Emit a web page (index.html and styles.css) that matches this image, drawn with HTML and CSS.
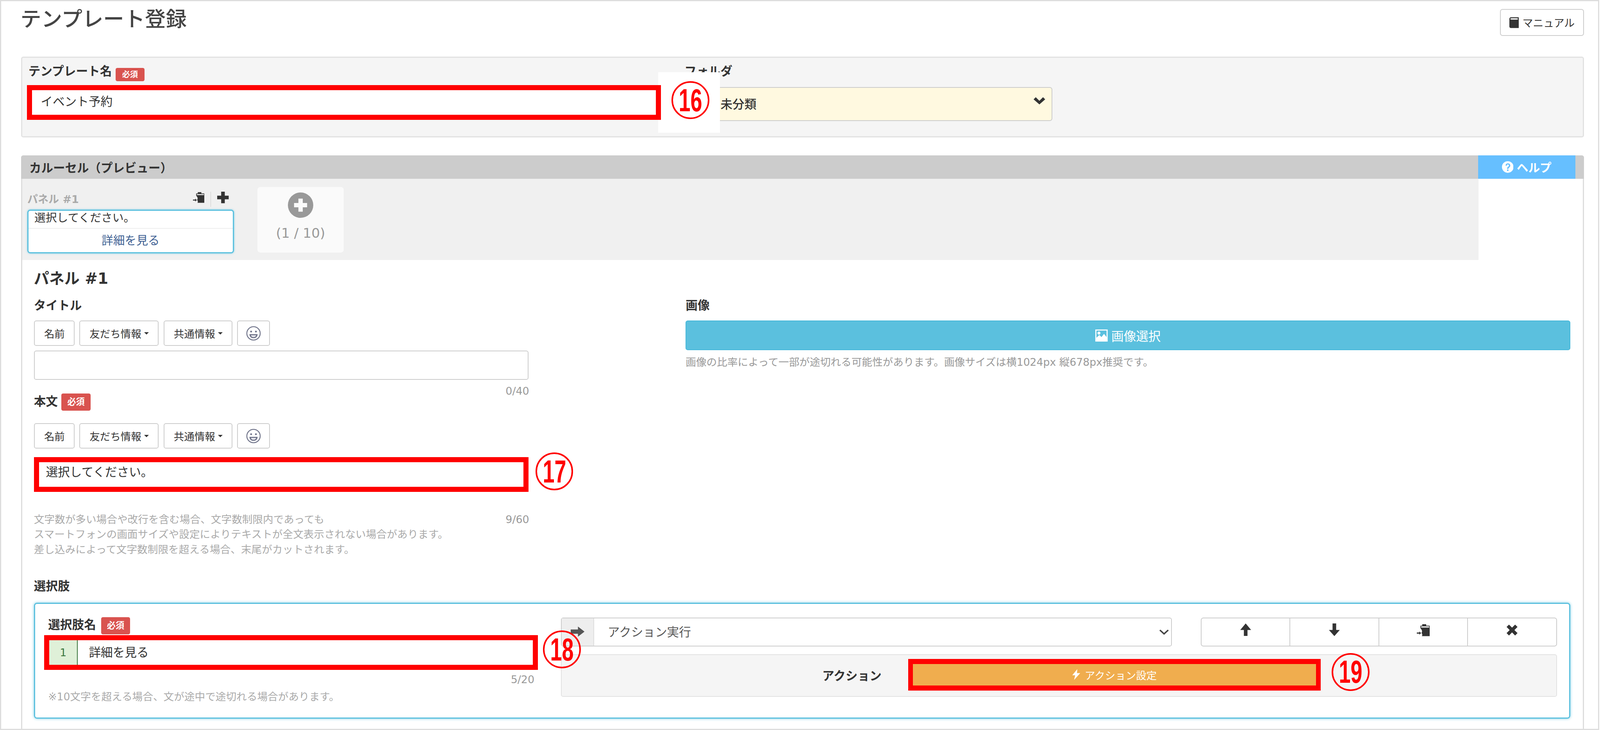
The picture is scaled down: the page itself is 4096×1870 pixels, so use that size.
FILE: index.html
```html
<!DOCTYPE html>
<html lang="ja">
<head>
<meta charset="utf-8">
<title>テンプレート登録</title>
<link rel="stylesheet" href="styles.css">
</head>
<body>
<svg class="defs" width="0" height="0" aria-hidden="true">
  <symbol id="i-copy" viewBox="0 0 36 33"><path fill-rule="evenodd" d="M15 0h11v4h10v29H14c2-3 1-6-1-9 3-4 1-9-3-13V4h5zM12 6v3h22V6z" fill="currentColor"/><path d="M0 23h7v-3l5 4.500-5 4.500v-3H0z" fill="currentColor"/></symbol>
  <symbol id="i-plus" viewBox="0 0 32 32"><path d="M11 0h10v11h11v10H21v11H11V21H0V11h11z" fill="currentColor"/></symbol>
  <symbol id="i-up" viewBox="0 0 30 35"><path d="M15 0l15 18H20v17H10V18H0z" fill="currentColor"/></symbol>
  <symbol id="i-down" viewBox="0 0 30 35"><path d="M10 0h10v18h10L15 35 0 18h10z" fill="currentColor"/></symbol>
  <symbol id="i-x" viewBox="0 0 32 32"><path d="M7 0l9 9 9-9 7 7-9 9 9 9-7 7-9-9-9 9-7-7 9-9-9-9z" fill="currentColor"/></symbol>
  <symbol id="i-smile" viewBox="0 0 40 40"><circle cx="20" cy="20" r="18" fill="none" stroke="currentColor" stroke-width="2.500"/><circle cx="13.500" cy="15" r="2.500" fill="currentColor"/><circle cx="26.500" cy="15" r="2.500" fill="currentColor"/><path d="M9 22h22c0 7-5 11-11 11S9 29 9 22z" fill="currentColor"/><path d="M13 25h14c-1 4-4 5-7 5s-6-1-7-5z" fill="#e8e8ee"/></symbol>
</svg>
<div class="page">
  <header class="page-head">
    <h1 class="page-title">テンプレート登録</h1>
    <button class="btn-manual" type="button">
      <svg class="ic-book" viewBox="0 0 28 32"><path d="M5 0h23v32H4c-2 0-4-2-4-4V5c0-3 2-5 5-5zm0 3c-1 0-2 1-2 2s1 2 2 2h20V3z" fill="#333"/></svg>
      <span>マニュアル</span>
    </button>
  </header>

  <section class="meta">
    <div class="meta-name">
      <div class="label-row label-row-name"><span class="label">テンプレート名</span><span class="badge badge-sm">必須</span></div>
      <div class="redbox redbox-name"><span class="mark mark-16"><span class="mark-num">16</span></span><div class="redbox-fill">イベント予約</div></div>
    </div>
    <div class="meta-folder">
      <div class="label-row"><span class="label">フォルダ</span></div>
      <div class="folder-select">
        <span class="folder-value">未分類</span>
        <svg class="ic-chev" viewBox="0 0 32 20"><path d="M0 6l6-6 10 10L26 0l6 6-16 14z" fill="#333"/></svg>
      </div>
    </div>
    <div class="patch"></div>
  </section>

  <section class="carousel">
    <div class="carousel-head">
      <span class="carousel-title">カルーセル（プレビュー）</span>
      <a class="help">
        <svg class="ic-help" viewBox="0 0 32 32"><circle cx="16" cy="16" r="16" fill="#fff"/><path d="M10 12c0-4 3-6 6-6 4 0 7 2 7 6 0 5-5 5-5 9h-4c0-6 5-6 5-9 0-2-1-3-3-3s-2 1-2 3zM14 23h4v4h-4z" fill="#66bfff"/></svg>
        <span>ヘルプ</span>
      </a>
    </div>
    <div class="strip">
      <div class="slot">
        <div class="slot-head">
          <span class="slot-name">パネル #1</span>
          <span class="slot-tools">
            <svg class="ic-tool"><use href="#i-copy"/></svg>
            <span class="slot-sep"></span>
            <svg class="ic-tool"><use href="#i-plus"/></svg>
          </span>
        </div>
        <div class="slot-card">
          <div class="slot-text">選択してください。</div>
          <div class="slot-link">詳細を見る</div>
        </div>
      </div>
      <div class="add-tile">
        <svg class="ic-add" viewBox="0 0 70 70"><circle cx="35" cy="35" r="35" fill="#999"/><path d="M29 17h12v12h12v12H41v12H29V41H17V29h12z" fill="#fafafa"/></svg>
        <span class="add-count">(1 / 10)</span>
      </div>
    </div>

    <div class="panel">
      <h2 class="panel-title">パネル #1</h2>
      <div class="panel-grid">
        <div class="panel-left">
          <div class="label label-title">タイトル</div>
          <div class="btn-row">
            <button class="btn" type="button">名前</button>
            <button class="btn" type="button">友だち情報<i class="caret"></i></button>
            <button class="btn" type="button">共通情報<i class="caret"></i></button>
            <button class="btn btn-emoji" type="button"><svg class="ic-smile"><use href="#i-smile"/></svg></button>
          </div>
          <div class="text-input"></div>
          <div class="count">0/40</div>
          <div class="label-row label-row-body"><span class="label">本文</span><span class="badge">必須</span></div>
          <div class="btn-row">
            <button class="btn" type="button">名前</button>
            <button class="btn" type="button">友だち情報<i class="caret"></i></button>
            <button class="btn" type="button">共通情報<i class="caret"></i></button>
            <button class="btn btn-emoji" type="button"><svg class="ic-smile"><use href="#i-smile"/></svg></button>
          </div>
          <div class="redbox redbox-body"><span class="mark mark-17"><span class="mark-num">17</span></span><div class="redbox-fill">選択してください。</div></div>
          <div class="help-row">
            <p class="hint-block">文字数が多い場合や改行を含む場合、文字数制限内であっても<br>スマートフォンの画面サイズや設定によりテキストが全文表示されない場合があります。<br>差し込みによって文字数制限を超える場合、末尾がカットされます。</p>
            <span class="count count-inline">9/60</span>
          </div>
        </div>
        <div class="panel-right">
          <div class="label label-title">画像</div>
          <button class="btn-image" type="button">
            <svg class="ic-picture" viewBox="0 0 34 34"><path fill-rule="evenodd" d="M0 0h34v34H0zM3 3v20l8-8 6 6 7-9 7 9V3zM10 6a4 4 0 1 1 0 8 4 4 0 0 1 0-8z" fill="#fff"/></svg>
            <span>画像選択</span>
          </button>
          <p class="hint">画像の比率によって一部が途切れる可能性があります。画像サイズは横1024px 縦678px推奨です。</p>
        </div>
      </div>

      <div class="label label-choice">選択肢</div>
      <div class="choice">
        <div class="choice-left">
          <div class="label-row label-row-choice"><span class="label">選択肢名</span><span class="badge">必須</span></div>
          <div class="redbox redbox-choice">
            <span class="mark mark-18"><span class="mark-num">18</span></span>
            <div class="choice-input"><span class="choice-no">1</span><span class="choice-text">詳細を見る</span></div>
          </div>
          <div class="count count-choice">5/20</div>
          <p class="hint hint-choice">※10文字を超える場合、文が途中で途切れる場合があります。</p>
        </div>
        <div class="choice-right">
          <div class="choice-top">
            <div class="action-select">
              <span class="action-addon"><svg class="ic-arrow" viewBox="0 0 38 28"><path d="M0 8h20V0l18 14-18 14v-8H0z" fill="#555"/></svg></span>
              <span class="action-value">アクション実行</span>
              <svg class="ic-sel" viewBox="0 0 28 16"><path d="M0 3l3-3 11 10L25 0l3 3-14 13z" fill="#444"/></svg>
            </div>
            <div class="tool-group">
              <button class="tool" type="button"><svg class="ic-tool-lg"><use href="#i-up"/></svg></button>
              <button class="tool" type="button"><svg class="ic-tool-lg"><use href="#i-down"/></svg></button>
              <button class="tool" type="button"><svg class="ic-tool-copy"><use href="#i-copy"/></svg></button>
              <button class="tool" type="button"><svg class="ic-tool-x"><use href="#i-x"/></svg></button>
            </div>
          </div>
          <div class="action-panel">
            <span class="action-label">アクション</span>
            <div class="redbox redbox-action">
              <span class="mark mark-19"><span class="mark-num">19</span></span>
              <div class="action-btn">
                <svg class="ic-flash" viewBox="0 0 22 30"><path d="M14 0L0 17h8L5 30l17-19h-9z" fill="#fff"/></svg>
                <span>アクション設定</span>
              </div>
            </div>
          </div>
        </div>
      </div>
    </div>
  </section>
</div>
</body>
</html>
```
FILE: styles.css
```css
html { overflow: hidden; background: #fff; }
body {
  margin: 0;
  font-family: "DejaVu Sans", "Noto Sans CJK JP", sans-serif;
  font-size: 26.9px;
  color: #333;
}
button { font-family: inherit; color: inherit; padding: 0; background: #fff; cursor: pointer; }
.defs { position: absolute; }

.page {
  box-sizing: border-box;
  width: 4094px;
  height: 1870px;
  border: 3px solid #ddd;
  padding: 20.2px 36px 0 51px;
  display: flex;
  flex-direction: column;
  background: #fff;
}

.page-head { display: flex; justify-content: space-between; align-items: flex-start; height: 68.75px; margin-bottom: 52.95px; flex: none; }
.page-title { margin: -3.7px 0 0 -1.7px; font-size: 53.4px; line-height: 59.5px; font-weight: 500; color: #444; }
.btn-manual {
  box-sizing: border-box;
  width: 214.6px;
  height: 68.75px;
  border: 2px solid #ccc;
  border-radius: 6.5px;
  display: flex;
  align-items: center;
  justify-content: center;
  gap: 9.3px;
  font-size: 26.9px;
}
.ic-book { width: 24px; height: 28px; }

.label { font-size: 30.66px; line-height: 33.44px; font-weight: 700; color: #333; }
.label-row { display: flex; align-items: flex-start; gap: 9.3px; }
.badge {
  box-sizing: border-box;
  width: 74.3px;
  height: 43.7px;
  border-radius: 4.6px;
  background: #d9534f;
  color: #fff;
  font-size: 22.3px;
  font-weight: 700;
  line-height: 43.7px;
  text-align: center;
}
.badge-sm { height: 34.4px; line-height: 34.4px; font-size: 20.4px; margin-top: 7.4px; }

.meta {
  position: relative;
  box-sizing: border-box;
  height: 207.2px;
  flex: none;
  border: 3px solid #e2e2e2;
  border-radius: 5.6px;
  background: #f5f5f5;
  padding: 18.6px 0 0 12px;
  display: flex;
}
.label-row-name { height: 51.1px; padding-left: 3.7px; }
.meta-name { width: 1623.1px; }
.meta-folder { margin-left: 60.2px; width: 942px; }
.meta-folder .label-row { height: 56.7px; }
.folder-select {
  box-sizing: border-box;
  height: 87.3px;
  border: 2px solid #ccc;
  border-radius: 6.5px;
  background: #fff9e0;
  display: flex;
  justify-content: space-between;
  padding: 24.2px 16.7px 0 90.1px;
  font-size: 30.66px;
  font-weight: 500;
}
.folder-value { line-height: 37.2px; }
.ic-chev { width: 29.7px; height: 18.6px; }
.patch { position: absolute; left: 1627.8px; top: 37.2px; width: 158px; height: 155.1px; background: #fff; }

.redbox { position: relative; box-sizing: border-box; height: 89.2px; border: 13px solid #f00; background: #fff; z-index: 2; }
.redbox-fill { box-sizing: border-box; height: 63.2px; font-size: 30.66px; line-height: 33.44px; }
.redbox-name .redbox-fill { padding: 13px 0 0 22.3px; }
.redbox-body .redbox-fill { padding: 9.3px 0 0 17.7px; }
.mark {
  position: absolute;
  box-sizing: border-box;
  width: 96.6px;
  height: 96.6px;
  border: 4px solid #f00;
  border-radius: 50%;
  color: #f00;
  display: flex;
  align-items: center;
  justify-content: center;
  font-family: "Liberation Sans", sans-serif;
  font-size: 81.75px;
  font-weight: 700;
  line-height: 1;
}
.mark-num { display: block; transform: scaleX(0.66); }
.mark-16 { left: calc(100% + 40px); top: -22.3px; }
.mark-17 { left: calc(100% + 30.7px); top: -24.2px; }
.mark-18 { left: calc(100% + 26px); top: -24.2px; }
.mark-19 { left: calc(100% + 40px); top: -27.9px; }

.carousel {
  flex: 1;
  min-height: 0;
  margin-top: 45.5px;
  box-sizing: border-box;
  border: solid #ddd;
  border-width: 0 3px;
  border-radius: 5.6px 5.6px 0 0;
}
.carousel-head { height: 60.4px; background: #ccc; display: flex; justify-content: space-between; align-items: center; padding-left: 21px; margin: 0 -3px; border-radius: 5.6px 5.6px 0 0; }
.carousel-title { font-size: 30.5px; font-weight: 700; color: #333; }
.help {
  box-sizing: border-box;
  width: 249px;
  height: 60.4px;
  margin-right: 22.3px;
  background: #66bfff;
  color: #fff;
  display: flex;
  align-items: center;
  justify-content: center;
  gap: 8.4px;
  font-size: 29.7px;
  font-weight: 700;
}
.ic-help { width: 29.7px; height: 29.7px; }

.strip { box-sizing: border-box; width: 3728px; height: 208.1px; background: #f0f0f0; padding: 21.4px 0 0 13px; display: flex; gap: 60.4px; align-items: flex-start; }
.slot { width: 528.6px; margin-top: 12.1px; }
.slot-head { display: flex; justify-content: space-between; height: 45.5px; }
.slot-name { font-size: 27px; line-height: 39px; font-weight: 700; color: #aaa; }
.slot-tools { display: flex; align-items: flex-start; margin-right: 13px; gap: 15.8px; }
.ic-tool { width: 29.7px; height: 29.7px; color: #333; }
.slot-sep { width: 1px; height: 39px; background: #ccc; }
.slot-card {
  box-sizing: border-box;
  height: 112.4px;
  border: 3px solid #5bc0de;
  border-radius: 7.4px;
  background: #fff;
  box-shadow: 0 0 5.6px #7fcde4;
}
.slot-text { box-sizing: border-box; height: 45.7px; font-size: 28.8px; line-height: 37.2px; padding-left: 14.9px; border-bottom: 2px solid #eee; }
.slot-link { text-align: center; font-size: 29.7px; line-height: 40.9px; padding-top: 10.8px; color: #3e5f92; }
.add-tile { box-sizing: border-box; width: 221.1px; height: 167.2px; background: #fafafa; border-radius: 7.4px; display: flex; flex-direction: column; align-items: center; padding-top: 13.9px; }
.ic-add { width: 65px; height: 65px; }
.add-count { margin-top: 20.4px; font-size: 34.4px; line-height: 37.2px; color: #999; }

.panel { padding: 25.1px 31.7px 0 29.7px; }
.panel-title { margin: 0 0 27.9px; font-size: 39px; line-height: 46.5px; font-weight: 700; color: #333; }
.panel-grid { display: grid; grid-template-columns: 1268px 2265px; column-gap: 400.6px; }
.label-title { margin-bottom: 22.3px; }
.btn-row { display: flex; gap: 12.1px; }
.btn {
  box-sizing: border-box;
  height: 65px;
  padding: 0 23.2px 0 24.2px;
  border: 2px solid #ccc;
  border-radius: 5.6px;
  font-size: 26.5px;
  display: flex;
  align-items: center;
}
.btn-emoji { width: 83.6px; padding: 0; justify-content: center; }
.caret { width: 0; height: 0; margin-left: 7.4px; border: 6.5px solid transparent; border-top-color: #333; border-bottom: 0; }
.ic-smile { width: 38px; height: 38px; color: #6f7389; }
.text-input { box-sizing: border-box; width: 1266.4px; height: 74.3px; margin-top: 12.1px; border: 2px solid #ccc; border-radius: 5.6px; background: #fff; }
.count { color: #999; font-size: 26.9px; line-height: 27.9px; text-align: right; }
.panel-left > .count { margin-top: 14.9px; }
.label-row-body { margin: -7.4px 0 32.5px; }
.label-row-body .label { margin-top: 3.7px; }
.redbox-body { width: 1266.4px; margin-top: 21.4px; }
.help-row { display: flex; justify-content: space-between; margin-top: 52px; }
.hint-block { margin: 0; font-size: 26.66px; line-height: 38.55px; color: #aaa; }
.count-inline { line-height: 38.55px; }
.hint { margin: 0; font-size: 26.66px; line-height: 33.44px; color: #999; }
.btn-image {
  box-sizing: border-box;
  width: 100%;
  height: 76.2px;
  border: 2px solid #46b8da;
  border-radius: 5.6px;
  background: #5bc0de;
  color: #fff;
  display: flex;
  align-items: center;
  justify-content: center;
  gap: 9.3px;
  font-size: 31.6px;
}
.ic-picture { width: 31.6px; height: 31.6px; }
.panel-right .hint { margin-top: 13.9px; }

.label-choice { margin-top: 57.7px; }
.choice {
  box-sizing: border-box;
  height: 297.3px;
  margin-top: 25.1px;
  border: 3px solid #5bc0de;
  border-radius: 7.4px;
  box-shadow: 0 0 7.4px #7fcde4;
  padding: 34.4px 0 0 23.3px;
  display: flex;
}
.choice-left { width: 1264.4px; flex: none; }
.label-row-choice { height: 45.5px; padding-left: 10.2px; gap: 13px; }
.label-row-choice .label { margin-top: 2.8px; }
.choice-input { display: flex; height: 63.2px; font-size: 30.66px; line-height: 63.2px; }
.choice-no { width: 71.5px; text-align: center; background: #dff0d8; color: #3c763d; border-right: 2px solid #3c763d; font-size: 26.9px; }
.choice-text { padding-left: 27.9px; }
.count-choice { margin-top: 11.1px; padding-right: 9.3px; }
.hint-choice { margin-top: 13px; padding-left: 10.2px; color: #aaa; }
.choice-right { width: 2550px; margin-left: 58.5px; margin-top: 0.9px; flex: none; }
.choice-top { display: flex; justify-content: space-between; height: 74.3px; }
.action-select { box-sizing: border-box; width: 1564.4px; border: 2px solid #ccc; border-radius: 5.6px; display: flex; align-items: center; padding-right: 6.5px; }
.action-addon { width: 83.6px; height: 100%; background: #eee; border-right: 2px solid #ddd; display: flex; align-items: center; justify-content: center; padding-bottom: 3px; box-sizing: border-box; }
.ic-arrow { width: 35.3px; height: 26px; }
.action-value { flex: 1; padding-left: 34.4px; font-size: 30.66px; line-height: 37.2px; color: #555; }
.ic-sel { width: 24px; height: 15px; }
.tool-group { display: flex; width: 912px; box-sizing: border-box; border: 2px solid #ccc; border-radius: 6.5px; }
.tool { flex: 1; border: 0; border-right: 2px solid #ccc; background: transparent; display: flex; justify-content: center; padding-top: 13px; }
.tool:last-child { border-right: 0; }
.ic-tool-lg { width: 27.9px; height: 32.5px; color: #333; }
.ic-tool-copy { width: 33.4px; height: 30.7px; color: #333; margin-top: 1.9px; }
.ic-tool-x { width: 29.7px; height: 27.9px; color: #333; margin-top: 2.8px; }
.action-panel {
  box-sizing: border-box;
  height: 109.6px;
  margin-top: 19.5px;
  border: 2px solid #e2e2e2;
  border-radius: 5.6px;
  background: #f5f5f5;
  display: flex;
  align-items: flex-start;
  padding: 10.2px 0 0 667.1px;
}
.action-label { flex: none; width: 156px; font-size: 30.66px; font-weight: 700; line-height: 33.44px; margin-top: 26.9px; color: #333; }
.redbox-action { flex: none; width: 1056.3px; height: 80.8px; margin-left: 64.2px; border-width: 13px 12px; }
.action-btn { height: 54.8px; background: #f0ad4e; color: #fff; display: flex; align-items: center; justify-content: center; gap: 11.1px; font-size: 26.5px; }
.ic-flash { width: 20.4px; height: 27.9px; }
```
